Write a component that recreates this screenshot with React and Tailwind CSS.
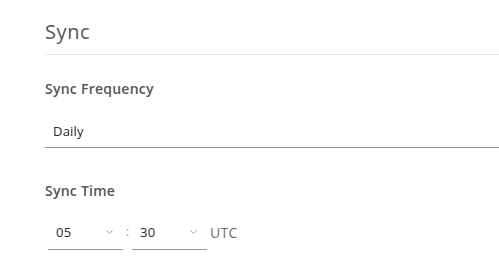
import React from 'react';

function Chevron() {
  return (
    <svg width="7" height="4" viewBox="0 0 7 4" className="shrink-0">
      <path d="M0.5 0.5 L3.5 3.3 L6.5 0.5" fill="none" stroke="#9a9a9a" strokeWidth="0.9" />
    </svg>
  );
}

function TimeSelect({ value }) {
  return (
    <div className="flex h-[29px] w-[75px] items-center justify-between border-b border-[#9a9a9a] pb-[7px] pl-[8px] pr-[10px]">
      <span className="text-[13px] leading-[18px] tracking-[0.3px] text-[#2b2b2b]">{value}</span>
      <Chevron />
    </div>
  );
}

export default function App() {
  return (
    <div className="h-[278px] w-[499px] overflow-hidden bg-white pl-[45px] pt-[20px] font-['Open_Sans',sans-serif]">
      <div className="border-b border-[#e8e8e8] pb-[10px]">
        <h2 className="text-[20px] leading-[24px] tracking-[0.6px] text-[#565656]">Sync</h2>
      </div>

      <div className="mt-[24px]">
        <label className="block text-[14px] font-semibold leading-[20px] tracking-[0.25px] text-[#565656]">
          Sync Frequency
        </label>
        <div className="mt-[18px] flex h-[31px] items-center border-b border-[#9a9a9a] pl-[8px]">
          <span className="text-[13px] tracking-[0.2px] text-[#2b2b2b]">Daily</span>
        </div>
      </div>

      <div className="mt-[33px]">
        <label className="block text-[14px] font-semibold leading-[20px] tracking-[0.25px] text-[#565656]">
          Sync Time
        </label>
        <div className="mt-[20px] flex items-center">
          <div className="ml-[3px]">
            <TimeSelect value="05" />
          </div>
          <span className="-mt-[7px] w-[9px] text-center text-[13px] text-[#9a9a9a]">:</span>
          <TimeSelect value="30" />
          <span className="-mt-[7px] ml-[3px] text-[14px] tracking-[0.3px] text-[#6f6f6f]">UTC</span>
        </div>
      </div>
    </div>
  );
}
